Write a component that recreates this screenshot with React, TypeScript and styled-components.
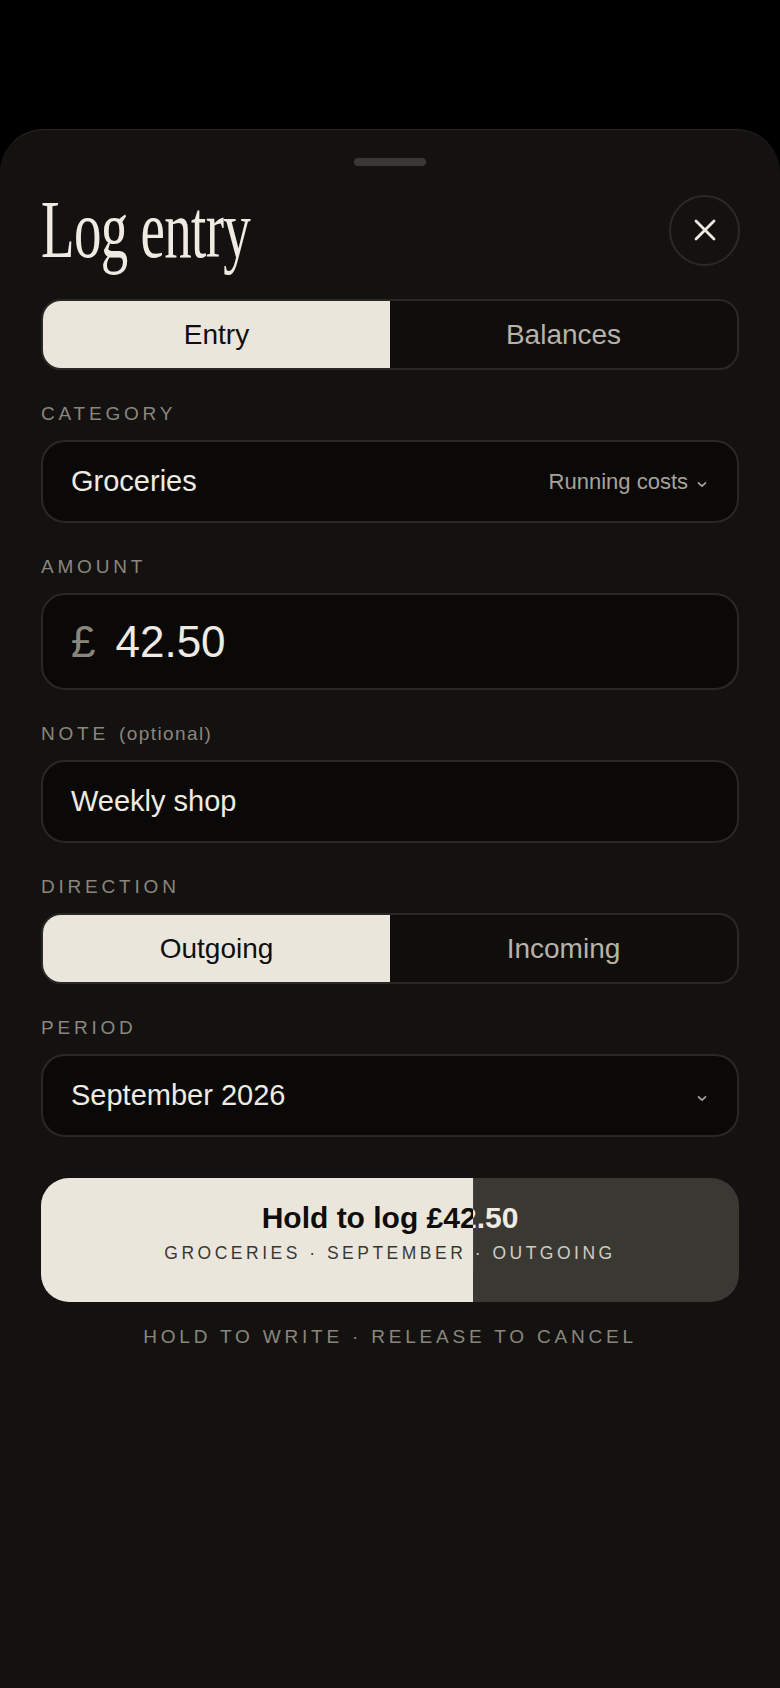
import styled, { createGlobalStyle } from "styled-components";

const GlobalStyle = createGlobalStyle`
    html, body {
        margin: 0;
        padding: 0;
        background: #000;
    }
    * {
        box-sizing: border-box;
    }
`

const colors = {
    sheet: "#131210",
    field: "#0a0908",
    border: "#2a2825",
    cream: "#ebe6dc",
    ink: "#0f0e0c",
    text: "#f0ebe2",
    muted: "#8b867d",
    soft: "#a8a298",
    track: "#3a3833",
}

const sans = `"Liberation Sans", Arial, sans-serif`
const serif = `"Liberation Serif", "Times New Roman", serif`

const HOLD_PROGRESS = 0.619

function Chevron() {
    return (
        <svg width="10" height="7" viewBox="0 0 10 7" fill="none">
            <path d="M1.5 1.8 5 5.2 8.5 1.8" stroke={colors.soft} strokeWidth="1.7" strokeLinecap="round" strokeLinejoin="round" />
        </svg>
    )
}

function CloseIcon() {
    return (
        <svg width="22" height="22" viewBox="0 0 22 22" fill="none">
            <path d="M2 2 20 20M20 2 2 20" stroke={colors.text} strokeWidth="2.8" strokeLinecap="round" />
        </svg>
    )
}

function Segmented({ options, active }: { options: string[]; active: number }) {
    return (
        <SegmentTrack>
            {options.map((label, i) => (
                <Segment key={label} $active={i === active}>{label}</Segment>
            ))}
        </SegmentTrack>
    )
}

export default function App() {
    const holdTitle = "Hold to log £42.50"
    const holdSub = "Groceries · September · Outgoing"

    return (
        <>
            <GlobalStyle />
            <Page>
                <Sheet>
                    <Handle />
                    <Header>
                        <Title>Log entry</Title>
                        <CloseButton aria-label="Close"><CloseIcon /></CloseButton>
                    </Header>

                    <Segmented options={["Entry", "Balances"]} active={0} />

                    <Form>
                        <Group>
                            <Label>Category</Label>
                            <Field>
                                <Value>Groceries</Value>
                                <Meta>Running costs <ChevronWrap><Chevron /></ChevronWrap></Meta>
                            </Field>
                        </Group>

                        <Group>
                            <Label>Amount</Label>
                            <Field $tall>
                                <Currency>£</Currency>
                                <Amount>42.50</Amount>
                            </Field>
                        </Group>

                        <Group>
                            <Label>Note <Optional>(optional)</Optional></Label>
                            <Field>
                                <Value>Weekly shop</Value>
                            </Field>
                        </Group>

                        <Group>
                            <Label>Direction</Label>
                            <Segmented options={["Outgoing", "Incoming"]} active={0} />
                        </Group>

                        <Group>
                            <Label>Period</Label>
                            <Field>
                                <Value>September 2026</Value>
                                <Meta><ChevronWrap><Chevron /></ChevronWrap></Meta>
                            </Field>
                        </Group>
                    </Form>

                    <HoldButton>
                        <HoldContent>
                            <HoldTitle>{holdTitle}</HoldTitle>
                            <HoldSub>{holdSub}</HoldSub>
                        </HoldContent>
                        <HoldFill style={{ clipPath: `inset(0 ${(1 - HOLD_PROGRESS) * 100}% 0 0)` }}>
                            <HoldContent $dark>
                                <HoldTitle>{holdTitle}</HoldTitle>
                                <HoldSub>{holdSub}</HoldSub>
                            </HoldContent>
                        </HoldFill>
                    </HoldButton>

                    <Hint>Hold to write · Release to cancel</Hint>
                </Sheet>
            </Page>
        </>
    )
}

const Page = styled.div`
    min-height: 100vh;
    padding-top: 129px;
    display: flex;
    flex-direction: column;
`

const Sheet = styled.section`
    flex: 1;
    min-height: calc(100vh - 129px);
    background: ${colors.sheet};
    border-top: 1.5px solid #2a2825;
    border-radius: 44px 44px 0 0;
    padding: 28px 41px 40px;
    display: flex;
    flex-direction: column;
    font-family: ${sans};
`

const Handle = styled.div`
    align-self: center;
    width: 72px;
    height: 8px;
    border-radius: 4px;
    background: #3a3835;
`

const Header = styled.header`
    margin-top: 29px;
    height: 70px;
    display: flex;
    align-items: center;
    justify-content: space-between;
`

const Title = styled.h1`
    margin: 0;
    font-family: ${serif};
    font-weight: 400;
    font-size: 82px;
    line-height: 1;
    color: ${colors.text};
    letter-spacing: -1px;
    transform: scaleX(0.67);
    transform-origin: left center;
    white-space: nowrap;
`

const CloseButton = styled.button`
    width: 71px;
    height: 71px;
    margin-right: -1px;
    border-radius: 50%;
    border: 2px solid #2c2a27;
    background: transparent;
    display: flex;
    align-items: center;
    justify-content: center;
    padding: 0;
`

const SegmentTrack = styled.div`
    margin-top: 34px;
    height: 71px;
    display: flex;
    border: 2px solid ${colors.border};
    border-radius: 20px;
    overflow: hidden;
    background: #0f0e0d;

    div > & {
        margin-top: 0;
    }
`

const Segment = styled.button<{ $active?: boolean }>`
    flex: 1;
    border: none;
    padding: 0;
    font-family: ${sans};
    font-size: 28px;
    background: ${p => p.$active ? colors.cream : "transparent"};
    color: ${p => p.$active ? colors.ink : "#b8b2a8"};
`

const Form = styled.div`
    margin-top: 33px;
    display: flex;
    flex-direction: column;
    gap: 33px;
`

const Group = styled.div`
    display: flex;
    flex-direction: column;
    gap: 15px;
`

const Label = styled.div`
    font-size: 19px;
    line-height: 22px;
    letter-spacing: 3.8px;
    text-transform: uppercase;
    color: ${colors.muted};
`

const Optional = styled.span`
    text-transform: none;
    letter-spacing: 1.4px;
    margin-left: 1px;
`

const Field = styled.div<{ $tall?: boolean }>`
    height: ${p => p.$tall ? 97 : 83}px;
    background: ${colors.field};
    border: 2px solid ${colors.border};
    border-radius: 24px;
    padding: 0 30px 0 28px;
    display: flex;
    align-items: center;
    gap: 16px;
`

const Value = styled.span`
    flex: 1;
    font-size: 29px;
    color: ${colors.text};
`

const Meta = styled.span`
    display: flex;
    align-items: center;
    gap: 9px;
    font-size: 22px;
    color: ${colors.soft};
`

const ChevronWrap = styled.span`
    display: flex;
    margin-top: 6px;
`

const Currency = styled.span`
    font-size: 44px;
    color: ${colors.muted};
    margin-right: 4px;
`

const Amount = styled.span`
    font-size: 44px;
    color: ${colors.text};
`

const HoldButton = styled.div`
    position: relative;
    margin-top: 41px;
    height: 124px;
    border-radius: 28px;
    background: ${colors.track};
    overflow: hidden;
`

const HoldFill = styled.div`
    position: absolute;
    inset: 0;
    background: ${colors.cream};
`

const HoldContent = styled.div<{ $dark?: boolean }>`
    height: 100%;
    padding-top: 23px;
    display: flex;
    flex-direction: column;
    align-items: center;
    gap: 8px;
    color: ${p => p.$dark ? colors.ink : colors.text};
`

const HoldTitle = styled.div`
    font-size: 30px;
    line-height: 34px;
    font-weight: 700;
`

const HoldSub = styled.div`
    font-size: 17.5px;
    line-height: 20px;
    letter-spacing: 3.5px;
    text-transform: uppercase;
    opacity: 0.82;
`

const Hint = styled.p`
    margin: 24px 0 0;
    text-align: center;
    font-size: 19px;
    line-height: 22px;
    letter-spacing: 3.8px;
    text-transform: uppercase;
    color: ${colors.muted};
`
